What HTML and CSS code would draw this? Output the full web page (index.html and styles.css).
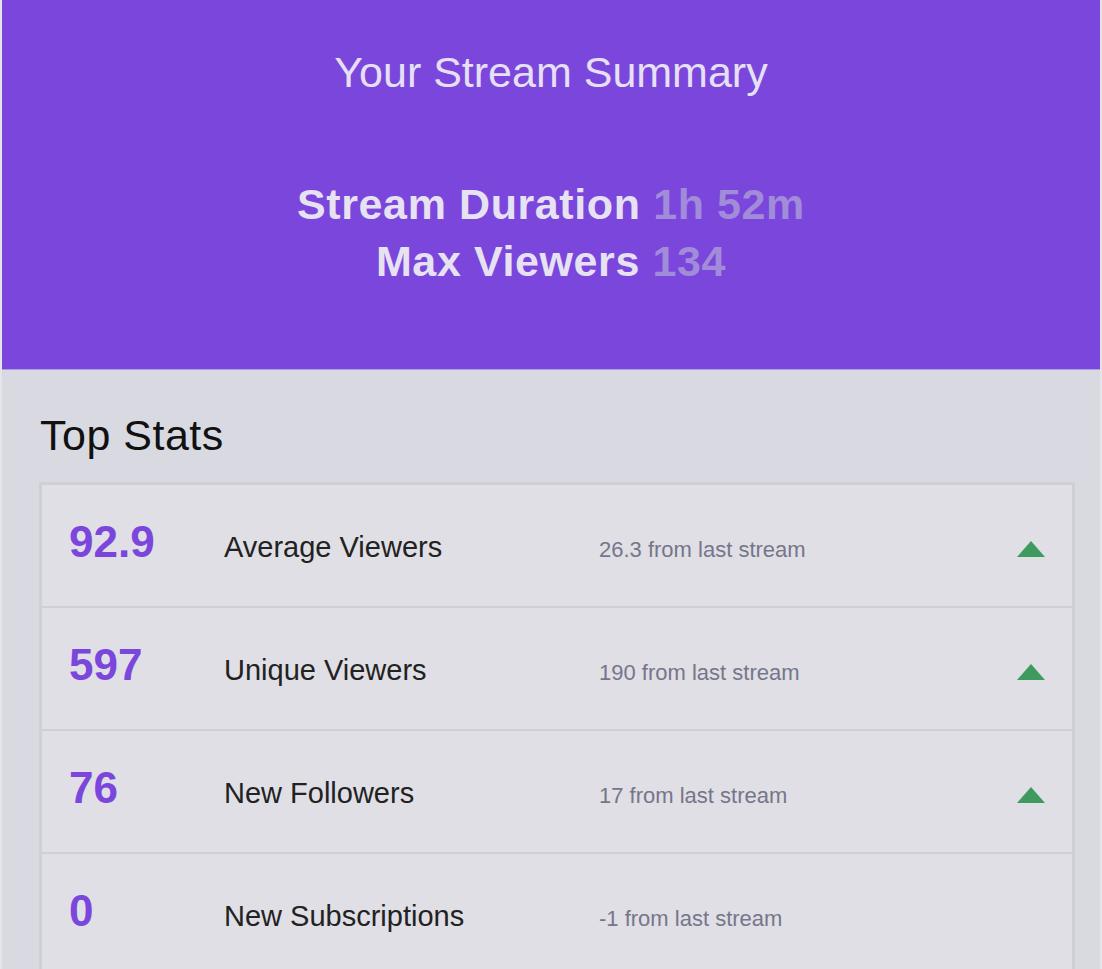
FILE: index.html
```html
<!DOCTYPE html>
<html lang="en">
<head>
    <meta charset="UTF-8">
    <title>Your Stream Summary</title>
    <link rel="stylesheet" href="styles.css">
</head>
<body>

<div class="page">

    <!-- Bandeau violet du haut -->
    <header class="summary">
        <h1 class="summary-title">Your Stream Summary</h1>
        <div class="summary-stats">
            <div>Stream Duration <span class="summary-value">1h 52m</span></div>
            <div>Max Viewers <span class="summary-value">134</span></div>
        </div>
    </header>

    <!-- Tableau des stats -->
    <section class="top-stats">
        <h2 class="section-title">Top Stats</h2>

        <div class="stats-table">
            <div class="stat-row">
                <div class="stat-number">92.9</div>
                <div class="stat-label">Average Viewers</div>
                <div class="stat-diff">26.3 from last stream</div>
                <svg class="stat-arrow" viewBox="0 0 28 16"><polygon points="14,0 28,16 0,16"/></svg>
            </div>
            <div class="stat-row">
                <div class="stat-number">597</div>
                <div class="stat-label">Unique Viewers</div>
                <div class="stat-diff">190 from last stream</div>
                <svg class="stat-arrow" viewBox="0 0 28 16"><polygon points="14,0 28,16 0,16"/></svg>
            </div>
            <div class="stat-row">
                <div class="stat-number">76</div>
                <div class="stat-label">New Followers</div>
                <div class="stat-diff">17 from last stream</div>
                <svg class="stat-arrow" viewBox="0 0 28 16"><polygon points="14,0 28,16 0,16"/></svg>
            </div>
            <div class="stat-row">
                <div class="stat-number">0</div>
                <div class="stat-label">New Subscriptions</div>
                <div class="stat-diff">-1 from last stream</div>
            </div>
        </div>
    </section>

</div>

</body>
</html>
```

FILE: styles.css
```css
body {
    margin: 0;
    background-color: #e4e4ea;
    font-family: "Liberation Sans", Arial, sans-serif;
}

.page {
    margin: 0 2px;
    background-color: #d9d9e1;
    min-height: 969px;
}

/* Bandeau violet */
.summary {
    height: 370px;
    box-sizing: border-box;
    padding-top: 48px;
    background-color: #7b46dc;
    border-bottom: 1px solid #ae9ce6;
    text-align: center;
}

.summary-title {
    margin: 0;
    font-size: 43px;
    line-height: 48px;
    font-weight: normal;
    color: #e6e0f4;
}

.summary-stats {
    margin-top: 80px;
    font-size: 43px;
    line-height: 57px;
    font-weight: bold;
    letter-spacing: 0.6px;
    color: #e6e2f2;
}

.summary-value {
    color: #a08cd8;
}

/* Top stats */
.top-stats {
    padding: 41px 25px 0 37px;
}

.section-title {
    margin: 0 0 23px 1px;
    font-size: 43px;
    line-height: 48px;
    font-weight: normal;
    letter-spacing: 0.5px;
    color: #111;
}

.stats-table {
    background-color: #dfdfe5;
    border: 3px solid #cfcfd6;
}

.stat-row {
    display: flex;
    align-items: baseline;
    height: 123px;
    box-sizing: border-box;
    padding: 32px 27px 0 27px;
    border-bottom: 2px solid #cfcfd6;
}

.stat-row:last-child {
    border-bottom: none;
}

.stat-number {
    width: 155px;
    font-size: 44px;
    font-weight: bold;
    color: #7b46dc;
}

.stat-label {
    width: 375px;
    font-size: 29px;
    color: #222;
}

.stat-diff {
    flex: 1;
    font-size: 22px;
    color: #76768a;
}

.stat-arrow {
    width: 28px;
    height: 16px;
    fill: #3e9a5f;
}
```
